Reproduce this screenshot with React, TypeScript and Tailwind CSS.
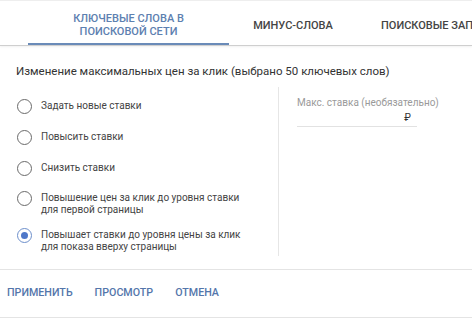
const OPTIONS: { label: string[]; checked?: boolean; mt: string }[] = [
  { label: ["Задать новые ставки"], mt: "mt-[13px]" },
  { label: ["Повысить ставки"], mt: "mt-[19px]" },
  { label: ["Снизить ставки"], mt: "mt-[19px]" },
  { label: ["Повышение цен за клик до уровня ставки", "для первой страницы"], mt: "mt-[18px]" },
  { label: ["Повышает ставки до уровня цены за клик", "для показа вверху страницы"], checked: true, mt: "mt-[13px]" },
];

function Radio({ checked }: { checked?: boolean }) {
  return (
    <span className="flex h-[12px] w-[15px] shrink-0 items-center justify-center overflow-visible">
      <span
        className={`flex h-[15px] w-[15px] shrink-0 items-center justify-center rounded-full border-[1.5px] ${
          checked ? "border-[#6d8fcb]" : "border-[#6a6a6a]"
        }`}
      >
        {checked && <span className="h-[7px] w-[7px] rounded-full bg-[#4f78c9]" />}
      </span>
    </span>
  );
}

export default function App() {
  return (
    <div className="flex h-[320px] w-[472px] flex-col overflow-hidden bg-white font-['Roboto',sans-serif] text-[#3c3c3c]">
      {/* Tabs */}
      <div className="flex h-[46px] shrink-0 border-t border-t-[#eee] border-b border-b-[#cfcfcf] pl-[28px] pt-[6px] shadow-[0_1px_2px_rgba(0,0,0,0.06)]">
        <div className="flex w-[201px] shrink-0 flex-col items-center justify-center border-b-2 border-[#6a8bb8] text-center text-[11px] font-medium leading-[13px] text-[#5d80b0]">
          <span>КЛЮЧЕВЫЕ СЛОВА В</span>
          <span>ПОИСКОВОЙ СЕТИ</span>
        </div>
        <div className="flex w-[128px] shrink-0 items-center justify-center text-[11px] font-medium text-[#444]">
          МИНУС-СЛОВА
        </div>
        <div className="flex min-w-0 items-center overflow-hidden whitespace-nowrap pl-[24px] text-[11px] font-medium text-[#444]">
          ПОИСКОВЫЕ ЗАПРОСЫ
        </div>
      </div>

      {/* Heading */}
      <div className="px-[16px] pt-[18px] text-[11.5px] leading-[15px] text-[#333]">
        Изменение максимальных цен за клик (выбрано 50 ключевых слов)
      </div>

      {/* Body */}
      <div className="mt-[8px] flex h-[169px] shrink-0">
        <div className="flex w-[279px] shrink-0 flex-col border-r border-[#e6e6e6] pl-[17px]">
          {OPTIONS.map((o, i) => (
            <div key={i} className={`flex items-start gap-[9px] ${o.mt}`}>
              <Radio checked={o.checked} />
              <div className="text-[10px] leading-[12px] text-[#444]">
                {o.label.map((l) => (
                  <div key={l}>{l}</div>
                ))}
              </div>
            </div>
          ))}
        </div>
        <div className="pl-[18px] pt-[9px]">
          <div className="text-[10px] leading-[13px] text-[#9a9a9a]">Макс. ставка (необязательно)</div>
          <div className="flex h-[18px] w-[120px] items-start justify-end border-b border-[#e2e2e2] pr-[6px] pt-[2px] text-[10px] leading-[13px] text-[#333]">
            ₽
          </div>
        </div>
      </div>

      {/* Actions */}
      <div className="mt-[13px] flex h-[48px] shrink-0 items-center gap-[22px] border-t border-[#e4e4e4] pl-[7px] text-[10.7px] font-medium text-[#5476ab]">
        <span>ПРИМЕНИТЬ</span>
        <span>ПРОСМОТР</span>
        <span>ОТМЕНА</span>
      </div>
      <div className="border-t border-[#e4e4e4]" />
    </div>
  );
}
